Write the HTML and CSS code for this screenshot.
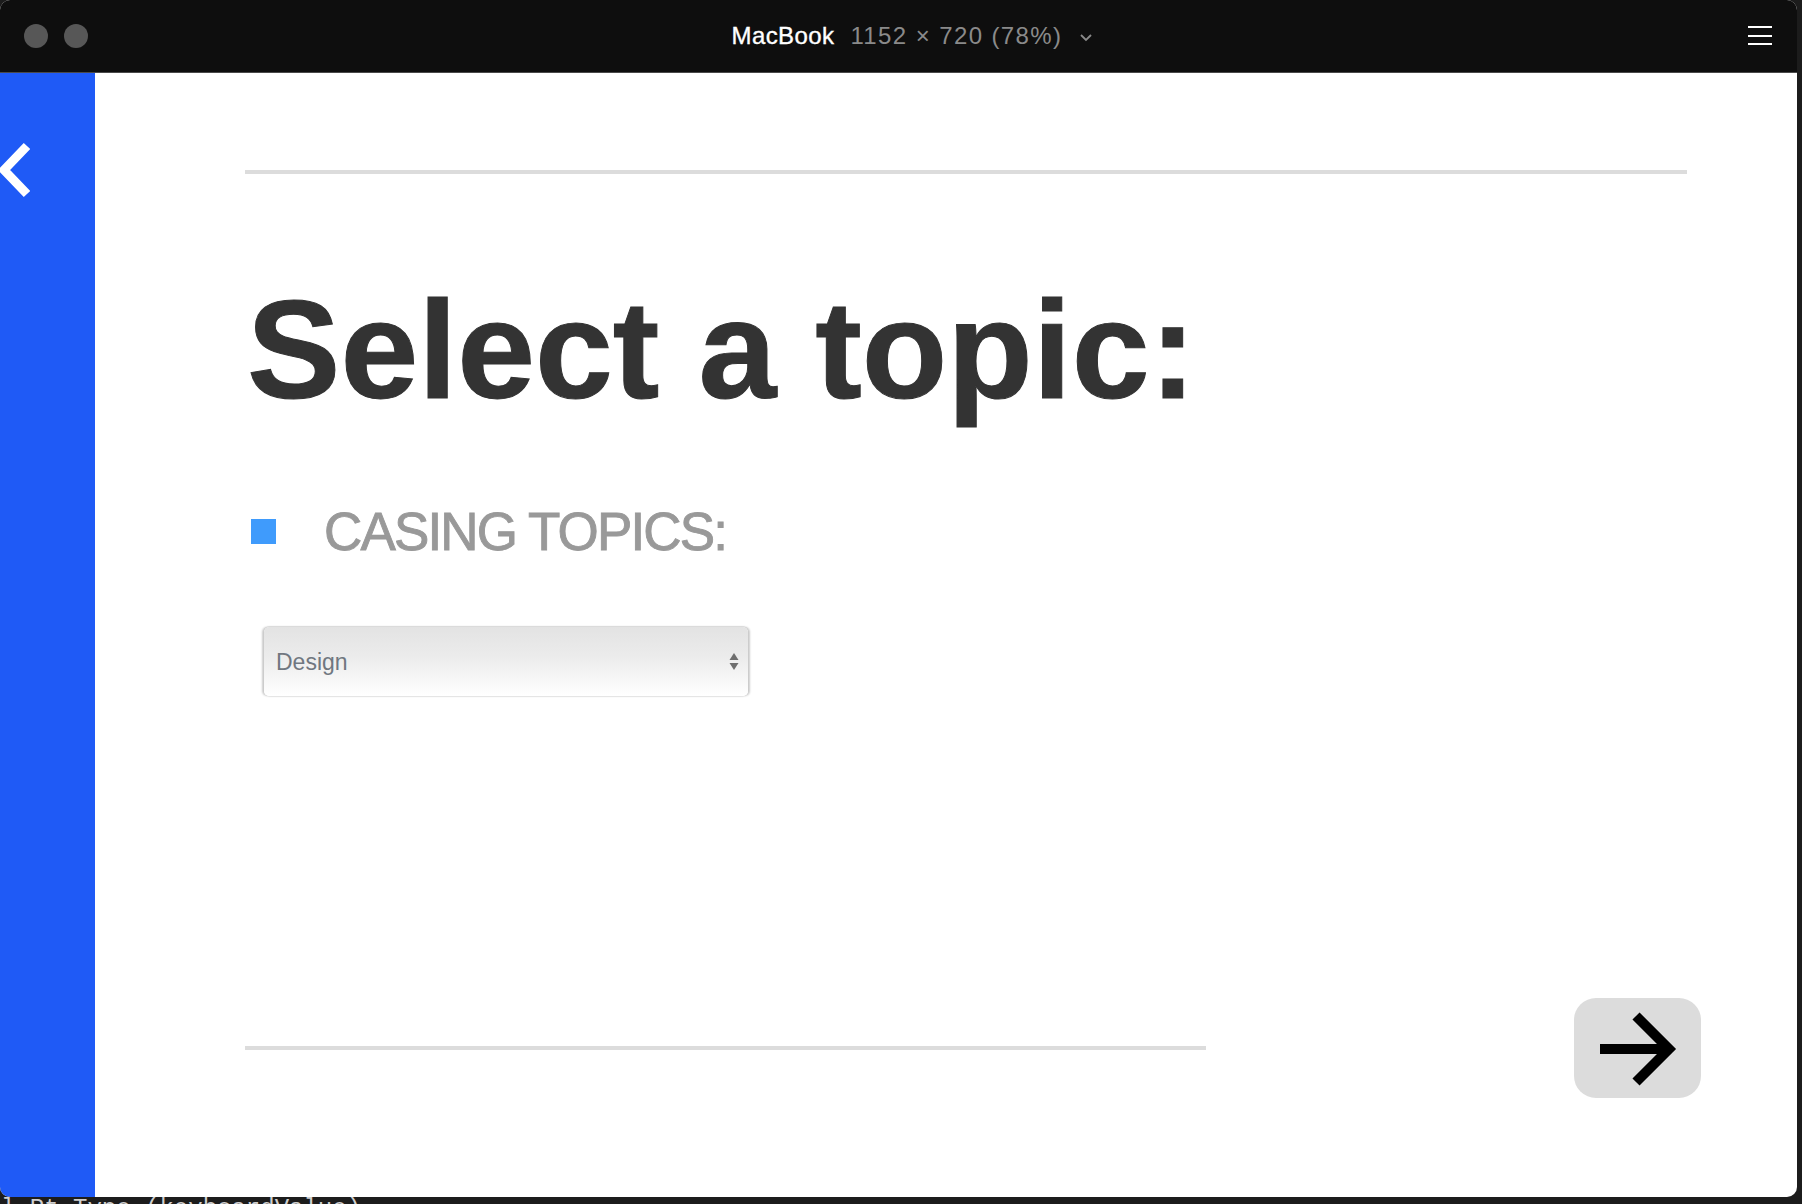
FILE: index.html
```html
<!DOCTYPE html>
<html lang="en">
<head>
<meta charset="utf-8">
<title>Select a topic</title>
<link rel="stylesheet" href="styles.css">
</head>
<body>
<div class="window">
  <header class="titlebar">
    <div class="lights">
      <span class="light"></span>
      <span class="light"></span>
    </div>
    <div class="title">
      <span class="device">MacBook</span>
      <span class="dims">1152 × 720 (78%)</span>
      <svg class="chev-down" width="14" height="10" viewBox="0 0 14 10"><polyline points="2,3 7,8 12,3" fill="none" stroke="#8a8a8a" stroke-width="1.8"/></svg>
    </div>
    <div class="menu">
      <span class="bar"></span>
      <span class="bar"></span>
      <span class="bar"></span>
    </div>
  </header>
  <div class="content">
    <aside class="sidebar">
      <svg class="back" width="40" height="60" viewBox="0 0 40 60"><polyline points="28,6 5,30 28,54" fill="none" stroke="#fff" stroke-width="9" stroke-linejoin="miter"/></svg>
    </aside>
    <main class="main">
      <div class="rule rule-top"></div>
      <h1 class="heading">Select a topic:</h1>
      <div class="section-row">
        <span class="square"></span>
        <span class="section-label">CASING TOPICS:</span>
      </div>
      <div class="select-wrap">
        <select class="topic-select">
          <option>Design</option>
          <option>Materials</option>
          <option>Manufacturing</option>
        </select>
        <svg class="updown" width="10" height="20" viewBox="0 0 10 20"><polygon points="5,2 9.5,9 0.5,9" fill="#6e6e6e"/><polygon points="0.5,12 9.5,12 5,19" fill="#6e6e6e"/></svg>
      </div>
      <div class="footer-row">
        <div class="rule rule-bottom"></div>
        <button class="next" type="button" aria-label="Next">
          <svg width="127" height="100" viewBox="0 0 127 100"><line x1="26" y1="51" x2="92" y2="51" stroke="#000" stroke-width="10"/><polyline points="62,18 95,51 62,84" fill="none" stroke="#000" stroke-width="10"/></svg>
        </button>
      </div>
    </main>
  </div>
</div>
<div class="terminal">l Pt Type (keyboardValue)</div>
</body>
</html>
```
FILE: styles.css
```css
* { box-sizing: border-box; }
html, body { margin: 0; padding: 0; }
body {
  width: 1802px;
  height: 1204px;
  overflow: hidden;
  background: #1c1c1c;
  font-family: "Liberation Sans", Arial, sans-serif;
}
.window {
  width: 1797px;
  height: 1197px;
  border-radius: 10px;
  overflow: hidden;
  display: flex;
  flex-direction: column;
  background: #fff;
}
.titlebar {
  height: 73px;
  flex: 0 0 73px;
  background: #0e0e0e;
  border-bottom: 1px solid #4a4a4a;
  display: grid;
  grid-template-columns: 1fr auto 1fr;
  align-items: center;
}
.lights {
  display: flex;
  gap: 16px;
  padding-left: 24px;
}
.light {
  width: 24px;
  height: 24px;
  border-radius: 50%;
  background: #575757;
}
.title {
  display: flex;
  align-items: center;
  padding-left: 28px;
  line-height: 72px;
  font-size: 24px;
}
.device {
  color: #fff;
  letter-spacing: 0.4px;
  -webkit-text-stroke: 0.35px #fff;
}
.dims {
  color: #8a8a8a;
  margin-left: 16px;
  letter-spacing: 1.4px;
}
.chev-down {
  margin-left: 17px;
  margin-top: 2px;
}
.menu {
  justify-self: end;
  margin-right: 25px;
  display: flex;
  flex-direction: column;
  gap: 6.5px;
  margin-top: -1px;
}
.menu .bar {
  width: 24px;
  height: 2px;
  background: #fff;
}
.content {
  flex: 1;
  display: flex;
}
.sidebar {
  width: 95px;
  flex: 0 0 95px;
  background: #1f5af6;
}
.back {
  display: block;
  margin-top: 67px;
  margin-left: -1px;
}
.main {
  flex: 1;
  display: flex;
  flex-direction: column;
  padding: 97px 110px 99px 150px;
}
.rule {
  height: 4px;
  background: #dcdcdc;
}
.heading {
  margin: 95px 0 0 2px;
  font-size: 140px;
  line-height: 161px;
  font-weight: bold;
  color: #333;
  letter-spacing: 0;
  -webkit-text-stroke: 1px #333;
}
.section-row {
  margin-top: 74px;
  display: flex;
  align-items: center;
  padding-left: 6px;
  height: 56px;
}
.square {
  width: 25px;
  height: 25px;
  background: #3f9bfc;
  margin-top: -2px;
}
.section-label {
  margin-left: 48px;
  font-size: 53px;
  line-height: 56px;
  color: #999;
  letter-spacing: -1.85px;
  -webkit-text-stroke: 0.9px #999;
}
.select-wrap {
  margin: 67px 0 0 19px;
  width: 484px;
  height: 69px;
  position: relative;
}
.topic-select {
  appearance: none;
  -webkit-appearance: none;
  width: 100%;
  height: 100%;
  border: none;
  border-radius: 5px;
  background: linear-gradient(#e3e3e3 0%, #ececec 45%, #ffffff 100%);
  box-shadow: -1.5px 0 2px rgba(0,0,0,0.2), 1.5px 0 2px rgba(0,0,0,0.2), 0 -1px 1px rgba(0,0,0,0.05);
  font-family: "Liberation Sans", Arial, sans-serif;
  font-size: 23px;
  color: #707780;
  padding: 0 30px 0 12px;
  outline: none;
}
.updown {
  position: absolute;
  right: 9px;
  top: 24px;
  pointer-events: none;
}
.footer-row {
  margin-top: auto;
  display: flex;
  align-items: center;
}
.rule-bottom {
  width: 961px;
  height: 4px;
}
.next {
  margin-left: auto;
  margin-right: -14px;
  width: 127px;
  height: 100px;
  border: none;
  border-radius: 22px;
  background: #dcdcdc;
  padding: 0;
  display: block;
}
.next svg { display: block; }
.terminal {
  height: 7px;
  overflow: hidden;
  font-family: "Liberation Mono", "Courier New", monospace;
  font-size: 24px;
  line-height: 24px;
  color: #cfcfcf;
  padding-left: 1px;
  white-space: pre;
}
```
